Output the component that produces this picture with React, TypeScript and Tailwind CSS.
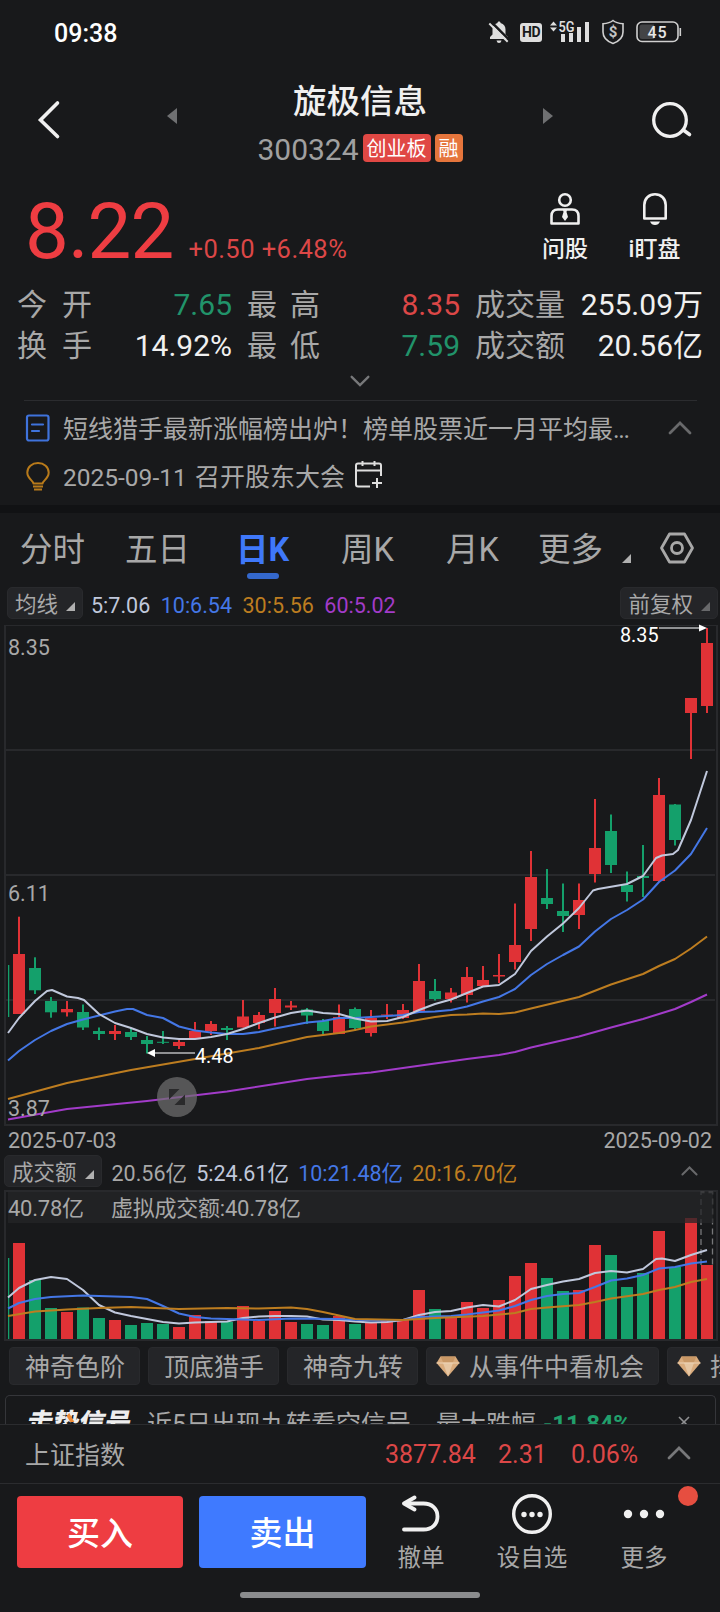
import { ReactNode } from "react";

const RED = "#e03236";
const GREEN = "#14a06b";

// [high, top, bottom, low, volume top, up]
type Candle = [number, number, number, number, number, boolean];

const candles: Candle[] = [
  [916.7, 954, 1014, 1014, 1243, true],
  [957.3, 968, 990.3, 994, 1280, false],
  [997, 1001, 1012.3, 1017.7, 1308, false],
  [1001, 1009, 1012.3, 1016.5, 1312, true],
  [1004.5, 1012, 1027.5, 1030, 1307.5, false],
  [1027.5, 1031, 1034, 1040, 1318, false],
  [1025, 1031, 1034, 1040, 1320, true],
  [1028, 1032, 1037, 1040, 1325, false],
  [1036, 1040, 1044, 1053.5, 1323, false],
  [1031, 1041.8, 1042.8, 1044, 1324, false],
  [1040, 1042, 1046, 1049, 1327, true],
  [1022, 1031, 1038, 1038, 1315, true],
  [1021, 1024, 1031, 1035, 1321, true],
  [1026, 1028, 1030, 1040, 1322, false],
  [1000, 1016.5, 1027.5, 1027.5, 1306, true],
  [1012, 1015, 1023, 1029, 1321, true],
  [988, 999, 1013, 1026.5, 1311, true],
  [1001, 1005.5, 1007.5, 1010, 1322, true],
  [1008, 1009.5, 1015.5, 1024, 1324, false],
  [1019, 1021, 1031, 1034, 1325, false],
  [1004.5, 1017, 1034, 1034, 1316, true],
  [1007.5, 1009, 1028, 1031, 1324, false],
  [1010, 1018, 1033, 1036.5, 1323, true],
  [1004, 1014.5, 1015.5, 1019, 1321, true],
  [1004, 1010, 1018, 1019, 1320, true],
  [964, 981, 1012, 1013, 1290, true],
  [979, 991, 999, 1000.5, 1309, false],
  [988, 992.5, 999, 1002.5, 1318, true],
  [967, 977, 995, 1002.5, 1302, true],
  [966, 980, 986, 987, 1308, true],
  [954, 975, 976.5, 983, 1300, true],
  [903.5, 945, 962, 969.5, 1276, true],
  [851, 877, 929, 941, 1263, true],
  [869, 898, 904, 909, 1278, false],
  [883.5, 911, 916, 932, 1291, false],
  [883.5, 900, 915, 929, 1290, true],
  [799, 848, 874, 882.5, 1245, true],
  [814.5, 831, 865, 873, 1255, false],
  [871.5, 885, 892, 901.5, 1287, false],
  [845, 876, 878, 897, 1273, false],
  [778, 795, 881, 882, 1231, true],
  [804, 804.5, 840, 845.5, 1267, false],
  [698, 698, 713, 759, 1218, true],
  [628, 643, 706, 713, 1265, true],
];

const priceLines = [
  {
    color: "#a23bc9",
    points:
      "8,1119.5 67,1109 147,1101 227,1091.5 275,1084 307,1079 339,1075.5 371,1072.5 403,1068 467,1059 499,1055 515,1052 531,1047.5 579,1036.5 611,1027.5 643,1019 659,1014 675,1009 691,1002 707,994.5",
  },
  {
    color: "#bd7d20",
    points:
      "8,1099 67,1083 131,1070 195,1059 259,1048 307,1037 323,1035 339,1033 355,1030 371,1026.5 403,1022.5 435,1017 451,1015 467,1014.5 483,1013.5 499,1014 515,1012.5 531,1008.5 579,997 611,984.5 643,974 659,966 675,959 691,948.5 707,936.5",
  },
  {
    color: "#4477e6",
    points:
      "8,1060.5 19,1051 35,1040 51,1031 67,1024 83,1019.5 99,1015.5 115,1011.5 127,1009 133,1009 147,1015 163,1018 179,1026.5 195,1030.5 211,1032.5 227,1034 243,1034 259,1032 275,1028.5 291,1025.5 307,1022.5 323,1021 339,1018 355,1018 371,1017 387,1016 403,1015 419,1012 435,1011.5 451,1010 467,1006.5 483,1001.5 499,997 515,989 531,975 547,964 563,955 579,946.5 595,931.5 611,919 627,910 643,899.5 659,882 675,870.5 691,854 707,828",
  },
  {
    color: "#c0c8dc",
    points:
      "8,1033 19,1018 35,1001 47,991 52,990 67,996.5 78,998 84,1000 99,1014 115,1023 131,1028 147,1034 163,1037.5 179,1039 195,1039 211,1037 227,1034 243,1029 259,1023 275,1017.5 291,1013 307,1010.5 323,1013 339,1014 355,1018.5 371,1021.5 387,1021 403,1017 419,1010 435,1004 451,999.5 467,993 483,986.5 499,985 515,974 531,951 547,936.5 563,923.5 579,908 593,890.5 598,889 627,884 643,876 656,858 662,855.5 673,854 678,850 691,820 707,771",
  },
];

const volumeLines = [
  {
    color: "#c0c8dc",
    points:
      "8,1297.5 19,1288 35,1280 51,1277 67,1279 83,1290 99,1305 115,1312.5 131,1316 147,1319 163,1322 179,1323.5 195,1322.5 227,1321.5 243,1318 259,1316.5 275,1316 291,1316 307,1316.5 323,1319.5 339,1320 355,1321.5 371,1322.5 387,1322 403,1320 419,1315 435,1312 451,1311 467,1307.5 483,1305 499,1306.5 515,1300 531,1289 547,1285 563,1281.5 579,1279 595,1273 611,1271 627,1272.5 643,1269 656,1259 662,1258.5 675,1261 691,1255 707,1250",
  },
  {
    color: "#4477e6",
    points:
      "8,1308.5 19,1303 35,1299 51,1297 83,1295.5 99,1296 131,1297 147,1299 163,1306 179,1313.5 195,1317 211,1318.5 243,1319.5 259,1320 291,1318.5 339,1319 371,1320.5 403,1320 419,1317 451,1316 467,1314.5 483,1312.5 499,1310.5 515,1306 531,1300 547,1296 563,1294 579,1293 595,1287 611,1280.5 627,1278.5 643,1275 659,1268.5 675,1267 691,1263.5 707,1261.5",
  },
  {
    color: "#bd7d20",
    points:
      "8,1316 35,1311.5 67,1309.5 99,1308 131,1307 179,1309 227,1308 259,1308.5 291,1307.5 307,1309 323,1312 339,1315.5 355,1319 403,1320 435,1318 483,1316 515,1313 531,1309 547,1307.5 579,1305 595,1302 611,1298.5 643,1294 659,1290 675,1287 691,1282 707,1279",
  },
];

function Corner({ className = "text-[#b0b0b0]" }: { className?: string }) {
  return (
    <svg width="9" height="9" viewBox="0 0 9 9" className={className}>
      <path d="M9 0V9H0Z" fill="currentColor" />
    </svg>
  );
}

function ChevronUp({ w, h, className }: { w: number; h: number; className: string }) {
  return (
    <svg width={w} height={h} viewBox="0 0 24 14" className={className}>
      <path
        d="M2 12L12 2L22 12"
        fill="none"
        stroke="currentColor"
        strokeWidth="2.8"
        strokeLinecap="round"
      />
    </svg>
  );
}

function Gem() {
  return (
    <svg width="24" height="21" viewBox="0 0 24 21" className="shrink-0">
      <path d="M4.5 0.5H19.5L23.5 7L12 20.5L0.5 7Z" fill="#d9ab7c" />
      <path d="M4.5 0.5H19.5L17 6H7Z" fill="#c99866" />
      <path d="M7 7H17L12 20.5Z" fill="#e6c6a2" />
      <path d="M0.5 7H23.5" stroke="#ecd3b5" strokeWidth="1" />
    </svg>
  );
}

function StatusBar() {
  return (
    <div className="flex h-[64px] shrink-0 items-center pl-[54px] pr-[38px] text-white">
      <span className="pt-[2px] text-[25px] font-medium leading-none">09:38</span>
      <svg width="22" height="24" viewBox="0 0 22 24" className="ml-auto">
        <path
          d="M11 1.5C12 1.5 12.5 2 12.5 3C16 4 17.5 6.5 17.5 9.5V14.5L20 17V19H2V17L4.5 14.5V9.5C4.5 6.5 6 4 9.5 3C9.5 2 10 1.5 11 1.5Z"
          fill="#dedede"
        />
        <path d="M8.5 20.5H13.5Q13 23 11 23T8.5 20.5Z" fill="#dedede" />
        <path d="M3.3 2L22 20.7" stroke="#18191b" strokeWidth="2.5" />
        <path d="M1.3 3.5L19.7 21.8" stroke="#dedede" strokeWidth="2" />
      </svg>
      <span className="ml-[10px] flex h-[19px] w-[22px] items-center justify-center rounded-[3px] bg-[#dedede] text-[14px] font-bold leading-none tracking-[-0.5px] text-[#18191b]">
        HD
      </span>
      <svg width="41" height="24" viewBox="0 0 41 24" className="ml-[8px]">
        <path d="M0 5.5L3.5 1.5L7 5.5ZM0 7.500L3.500 11.500L7 7.500Z" fill="#dedede" />
        <text
          x="8.500"
          y="11.500"
          fontSize="14.500"
          fontWeight="600"
          textLength="16"
          lengthAdjust="spacingAndGlyphs"
          fill="#dedede"
        >
          5G
        </text>
        <path
          d="M11 14h4v8h-4zM19 13h4v9h-4zM27 7h4v15h-4zM35 2h4v20h-4z"
          fill="#dedede"
        />
      </svg>
      <svg width="24" height="26" viewBox="0 0 24 26" className="ml-[10px]">
        <path
          d="M12 1.5C15 4 18.5 4.5 22 4.8V13C22 18.5 17.5 22.5 12 24.5C6.5 22.5 2 18.5 2 13V4.8C5.5 4.5 9 4 12 1.5Z"
          fill="none"
          stroke="#d0d0d0"
          strokeWidth="1.6"
        />
        <text x="12" y="18" fontSize="15" fontWeight="700" textAnchor="middle" fill="#c4c4c4">
          $
        </text>
      </svg>
      <svg width="46" height="22" viewBox="0 0 46 22" className="ml-[11px]">
        <rect x="1" y="1" width="41" height="19.500" rx="5" fill="none" stroke="#d0d0d0" strokeWidth="1.600" />
        <path d="M6 3.500H18V18H6Q3.500 18 3.500 15.500V6Q3.500 3.500 6 3.500Z" fill="#434446" />
        <rect x="43.500" y="7" width="1.600" height="8" fill="#d0d0d0" />
        <text x="21.500" y="16.500" fontSize="16" fontWeight="500" textAnchor="middle" letterSpacing="0.800" fill="#e6e6e6">
          45
        </text>
      </svg>
    </div>
  );
}

function Header() {
  return (
    <header className="flex h-[116px] shrink-0 items-start">
      <svg width="24" height="42" viewBox="0 0 24 42" className="ml-[37px] mt-[35px]">
        <path
          d="M20.5 4L3.5 21L20.5 37.5"
          fill="none"
          stroke="#f0f0f0"
          strokeWidth="3.6"
          strokeLinecap="round"
        />
      </svg>
      <svg width="10" height="16" viewBox="0 0 10 16" className="ml-[106px] mt-[44px]">
        <path d="M10 0V16L0 8Z" fill="#6f7072" />
      </svg>
      <div className="flex w-[366px] flex-col items-center">
        <h1 className="mt-[17px] h-[42px] text-[33.5px] font-medium leading-[42px] text-[#f0f0f0]">
          旋极信息
        </h1>
        <div className="mt-[8px] flex h-[35px] items-center">
          <span className="mr-[4px] pt-[2px] text-[30px] leading-[35px] text-[#a0a0a0]">300324</span>
          <span className="mb-[2px] flex h-[28px] w-[68px] items-center justify-center rounded-[4px] bg-[#e04844] pt-[2px] text-[20px] leading-none text-white">
            创业板
          </span>
          <span className="mb-[2px] ml-[4px] flex h-[28px] w-[28px] items-center justify-center rounded-[4px] bg-[#e5753c] pt-[2px] text-[20px] leading-none text-white">
            融
          </span>
        </div>
      </div>
      <svg width="10" height="16" viewBox="0 0 10 16" className="mt-[44px]">
        <path d="M0 0V16L10 8Z" fill="#6f7072" />
      </svg>
      <svg width="42" height="38" viewBox="0 0 42 38" className="ml-[98px] mt-[37px]">
        <circle cx="19" cy="19" r="16.3" fill="none" stroke="#f0f0f0" strokeWidth="3.3" />
        <path d="M33 29.5L38.500 33.500" stroke="#f0f0f0" strokeWidth="3.600" strokeLinecap="round" />
      </svg>
    </header>
  );
}

function Price() {
  return (
    <section className="flex h-[100px] shrink-0">
      <div className="flex w-[525px] items-baseline pl-[25px] text-[#ee3d42]">
        <span className="text-[78px] leading-[104px] tracking-[-0.9px]">8.22</span>
        <span className="ml-[15px] text-[25.5px] tracking-[0.45px] text-[#dc4747]">+0.50 +6.48%</span>
      </div>
      <div className="flex w-[80px] flex-col items-center pt-[12px]">
        <svg width="32" height="34" viewBox="0 0 32 34">
          <circle cx="16" cy="8" r="5.8" fill="none" stroke="#f0f0f0" strokeWidth="2.6" />
          <path
            d="M9 17.5H23C27.5 17.5 29.5 20 29.5 24V31.5H2.5V24C2.5 20 4.5 17.5 9 17.5Z"
            fill="none"
            stroke="#f0f0f0"
            strokeWidth="2.6"
            strokeLinejoin="round"
          />
          <path d="M14 18H18L17.5 20L19 25L16 29L13 25L14.5 20Z" fill="#f0f0f0" />
        </svg>
        <span className="mt-[8px] text-[23px] font-medium leading-[32px] text-[#f0f0f0]">问股</span>
      </div>
      <div className="flex w-[99px] flex-col items-center pt-[12px]">
        <svg width="28" height="34" viewBox="0 0 28 34">
          <path
            d="M3.3 26.5V13C3.3 6.5 8 2.3 14 2.3S24.7 6.5 24.7 13V26.5Z"
            fill="none"
            stroke="#f0f0f0"
            strokeWidth="2.6"
            strokeLinejoin="round"
          />
          <path d="M9 29.5H19Q17.5 33 14 33T9 29.5Z" fill="#f0f0f0" />
        </svg>
        <span className="mt-[8px] text-[23px] font-medium leading-[32px] text-[#f0f0f0]">i盯盘</span>
      </div>
    </section>
  );
}

function Stat({ label, value, className }: { label: string[]; value: string; className: string }) {
  return (
    <>
      <span className="flex justify-between text-[#a8a8a8]">
        {label.map((c) => (
          <span key={c}>{c}</span>
        ))}
      </span>
      <span className={"text-right " + className}>{value}</span>
    </>
  );
}

function Stats() {
  return (
    <section className="shrink-0 pt-[4px]">
      <div className="flex h-[82px] gap-[15px] pl-[17px] pr-[17px] text-[30px] leading-[41px]">
        <div className="grid w-[215px] grid-cols-[75px_1fr]">
          <Stat label={["今", "开"]} value="7.65" className="text-[#21936a]" />
          <Stat label={["换", "手"]} value="14.92%" className="text-[#f0f0f0]" />
        </div>
        <div className="grid w-[213px] grid-cols-[73px_1fr]">
          <Stat label={["最", "高"]} value="8.35" className="text-[#dc4747]" />
          <Stat label={["最", "低"]} value="7.59" className="text-[#21936a]" />
        </div>
        <div className="grid flex-1 grid-cols-[90px_1fr]">
          <Stat label={["成交量"]} value="255.09万" className="text-[#f0f0f0]" />
          <Stat label={["成交额"]} value="20.56亿" className="text-[#f0f0f0]" />
        </div>
      </div>
      <div className="flex h-[34px] justify-center pt-[9px]">
        <ChevronUp w={20} h={12} className="rotate-180 text-[#77787a]" />
      </div>
    </section>
  );
}

function News() {
  return (
    <section className="ml-[24px] mr-[23px] h-[105px] shrink-0 border-t border-[#2b2c2f] text-[25px] text-[#a8a8a8]">
      <div className="flex h-[54px] items-center">
        <svg width="25" height="28" viewBox="0 0 25 28" className="ml-[1px]">
          <rect x="2" y="1.5" width="21.5" height="25" rx="2" fill="none" stroke="#3f73dc" strokeWidth="2.2" />
          <path d="M7 10.5H18M7 17H14" stroke="#3f73dc" strokeWidth="2.2" strokeLinecap="round" />
        </svg>
        <span className="ml-[13px] whitespace-nowrap pt-[3px] leading-[32px]">
          短线猎手最新涨幅榜出炉！榜单股票近一月平均最<span className="tracking-[-1.3px]">...</span>
        </span>
        <ChevronUp w={24} h={14} className="ml-auto mr-[5px] text-[#68696b]" />
      </div>
      <div className="flex h-[45px] items-center">
        <svg width="26" height="30" viewBox="0 0 26 30" className="ml-[1px] mt-[-4px]">
          <path
            d="M8.5 22.5C8 19.5 2.3 17.5 2.3 11.5C2.3 6 7 2 13 2S23.7 6 23.7 11.5C23.7 17.5 18 19.5 17.5 22.5Z"
            fill="none"
            stroke="#b87a1a"
            strokeWidth="2"
            strokeLinejoin="round"
          />
          <path d="M8 25.5H18M9 28.5H17" stroke="#b87a1a" strokeWidth="1.8" />
        </svg>
        <span className="ml-[12px] whitespace-nowrap leading-[32px]">
          <span className="mr-[2px] text-[24.5px]">2025-09-11</span> 召开股东大会
        </span>
        <svg width="30" height="30" viewBox="0 0 30 30" className="ml-[9px] mt-[-5px]">
          <path
            d="M16 26.5H4Q2 26.5 2 24.5V5.5Q2 3.5 4 3.5H25Q27 3.5 27 5.5V16M2 10.5H27M8.5 1V6M20.5 1V6M23 18V28M18 23H28"
            fill="none"
            stroke="#dedede"
            strokeWidth="2"
          />
        </svg>
      </div>
    </section>
  );
}

function Tab({ children, active }: { children: ReactNode; active?: boolean }) {
  return (
    <div
      className={
        "relative flex w-[105px] justify-center leading-[44px] " +
        (active ? "font-bold text-[#3f78fa]" : "text-[#a8a8a8]")
      }
    >
      {children}
      {active && <span className="absolute top-[45px] h-[6px] w-[32px] rounded-full bg-[#3468cc]" />}
    </div>
  );
}

function Tabs() {
  return (
    <nav className="flex h-[74px] shrink-0 pt-[15px] text-[32.5px]">
      <Tab>分时</Tab>
      <Tab>五日</Tab>
      <Tab active>日K</Tab>
      <Tab>周K</Tab>
      <Tab>月K</Tab>
      <div className="flex w-[106px] pl-[13px] leading-[44px] text-[#a8a8a8]">
        更多
        <Corner className="ml-auto mt-[26px] text-[#b0b0b0]" />
      </div>
      <svg width="36" height="32" viewBox="0 0 36 32" className="ml-[28px] mt-[4px]">
        <path
          d="M10.5 2H25.5L33.5 16L25.5 30H10.5L2.5 16Z"
          fill="none"
          stroke="#a8a8a8"
          strokeWidth="2.8"
          strokeLinejoin="round"
        />
        <circle cx="18" cy="16" r="5.5" fill="none" stroke="#a8a8a8" strokeWidth="2.8" />
      </svg>
    </nav>
  );
}

function Picker({ label, dim }: { label: string; dim?: boolean }) {
  return (
    <div className="flex h-[32px] items-center rounded-[5px] border border-[#292a2d] bg-[#242528] px-[7px] leading-none text-[#a8a8a8]">
      <span className="whitespace-nowrap pt-[3px]">{label}</span>
      <Corner
        className={dim ? "ml-[8px] mt-[6px] text-[#68696b]" : "ml-[8px] mt-[6px] text-[#b0b0b0]"}
      />
    </div>
  );
}

function PriceChart() {
  return (
    <svg width="720" height="502" viewBox="0 624 720 502" className="block shrink-0">
      <g stroke="#28292c" strokeWidth="2" fill="none">
        <path d="M4 625.5H718" strokeWidth="1" />
        <path d="M5 625V1125H717V625" />
        <path d="M6 750H715M6 875H715M6 1000H715" />
      </g>
      <rect x="8" y="965" width="1.3" height="52" fill={GREEN} />
      {candles.map(([high, top, bottom, low, , up], i) => (
        <g key={i} fill={up ? RED : GREEN}>
          <rect x={18 + i * 16} y={high} width="2" height={low - high} />
          <rect x={13 + i * 16} y={top} width="12" height={bottom - top} />
        </g>
      ))}
      {priceLines.map((line) => (
        <polyline
          key={line.color}
          points={line.points}
          fill="none"
          stroke={line.color}
          strokeWidth="2"
          strokeLinejoin="round"
        />
      ))}
      <circle cx="177" cy="1097" r="20" fill="#707070" fillOpacity="0.7" />
      <path d="M169 1089H179.5L169 1099.5ZM185 1105H174.5L185 1094.5Z" fill="#2a2a2b" />
      <g stroke="#909193" strokeWidth="1.8">
        <path d="M154 1053H195M659 628H700" />
      </g>
      <path d="M147 1053L155 1049V1057ZM707 628L699 624.5V631.5Z" fill="#fff" />
      <g fontSize="19.8" fill="#fff">
        <text x="620" y="642">8.35</text>
        <text x="195" y="1063">4.48</text>
      </g>
      <g fontSize="21.5" fill="#a8a8a8">
        <text x="8" y="655">8.35</text>
        <text x="8" y="901">6.11</text>
        <text x="8" y="1116">3.87</text>
      </g>
    </svg>
  );
}

function VolumeChart() {
  return (
    <svg width="720" height="151" viewBox="0 1190 720 151" className="block shrink-0">
      <rect x="5" y="1191" width="712" height="149" fill="none" stroke="#28292c" strokeWidth="2" />
      <rect x="8" y="1258" width="1.3" height="81" fill={GREEN} />
      {candles.map((c, i) => (
        <rect key={i} x={13 + i * 16} y={c[4]} width="12" height={1339 - c[4]} fill={c[5] ? RED : GREEN} />
      ))}
      <path d="M701 1265V1192.5H712.5V1265" fill="none" stroke="#77787a" strokeWidth="1.3" strokeDasharray="6 4" />
      {volumeLines.map((line) => (
        <polyline
          key={line.color}
          points={line.points}
          fill="none"
          stroke={line.color}
          strokeWidth="2"
          strokeLinejoin="round"
        />
      ))}
      <rect x="8" y="1192" width="705" height="31" fill="#242528" fillOpacity="0.75" />
      <g fontSize="22" fill="#a8a8a8">
        <text x="8" y="1215.5" textLength="76">40.78亿</text>
        <text x="111" y="1215.5" textLength="190">虚拟成交额:40.78亿</text>
      </g>
    </svg>
  );
}

function Chip({ children, gem }: { children: ReactNode; gem?: boolean }) {
  return (
    <div
      className={
        "flex h-[38px] shrink-0 items-center rounded-[4px] border border-[#292a2d] bg-[#242528] pr-[14px] leading-none " +
        (gem ? "gap-[9px] pl-[9px]" : "pl-[15px]")
      }
    >
      {gem && <Gem />}
      <span className="whitespace-nowrap pt-[3px]">{children}</span>
    </div>
  );
}

function SignalCard() {
  return (
    <div className="ml-[5px] mr-[4px] mt-[10px] flex h-[29px] shrink-0 items-start overflow-hidden rounded-t-[5px] border border-b-0 border-[#35363a] text-[25px] leading-[57px]">
      <span className="relative ml-[21px] w-[104px] -skew-x-12 whitespace-nowrap text-[26px] font-black leading-[55px] text-[#eeeeee]">
        走势信号
        <svg width="10" height="10" viewBox="0 0 10 10" className="absolute left-[38px] top-[17px]">
          <path d="M2 0L9 9H5L0 3Z" fill="#ee8a35" />
        </svg>
      </span>
      <span className="ml-[16px] whitespace-nowrap text-[#a8a8a8]">
        近5日出现九转看空信号，最大跌幅
      </span>
      <span className="ml-[7px] text-[24px] font-bold tracking-[-0.2px] text-[#21a06c]">-11.84%</span>
      <svg width="12" height="12" viewBox="0 0 12 12" className="ml-auto mr-[25px] mt-[20px]">
        <path d="M1 1L11 11M11 1L1 11" stroke="#909193" strokeWidth="1.6" />
      </svg>
    </div>
  );
}

function IndexBar() {
  return (
    <div className="flex h-[59px] shrink-0 items-center border-t border-[#2b2c2f] pl-[25px] pr-[29px] text-[25px] text-[#dc4747]">
      <span className="w-[360px] pt-[3px] leading-[32px] text-[#a8a8a8]">上证指数</span>
      <span className="w-[113px] pt-[2px] leading-[32px]">3877.84</span>
      <span className="w-[73px] pt-[2px] leading-[32px]">2.31</span>
      <span className="pt-[2px] leading-[32px]">0.06%</span>
      <ChevronUp w={24} h={14} className="mb-[2px] ml-auto text-[#77787a]" />
    </div>
  );
}

function Action({ label, icon, className }: { label: string; icon: ReactNode; className: string }) {
  return (
    <button className={"relative flex flex-col items-center " + className}>
      <span className="flex h-[42px] items-center">{icon}</span>
      <span className="mt-[7px] whitespace-nowrap text-[23.5px] leading-[32px] text-[#a8a8a8]">{label}</span>
    </button>
  );
}

function TradeBar() {
  return (
    <footer className="flex h-[109px] shrink-0 items-start border-t border-[#2b2c2f] pl-[17px]">
      <button className="mt-[12px] h-[72px] w-[166px] rounded-[4px] bg-[#ee3d42] pt-[3px] text-[33px] font-medium leading-[69px] text-white">
        买入
      </button>
      <button className="ml-[16px] mt-[12px] h-[72px] w-[167px] rounded-[4px] bg-[#3f7aff] pt-[3px] text-[33px] font-medium leading-[69px] text-white">
        卖出
      </button>
      <Action
        label="撤单"
        className="ml-[15px] mt-[9px] w-[80px]"
        icon={
          <svg width="40" height="38" viewBox="0 0 40 38" className="mb-[1px]">
            <path
              d="M3 34.5H22.5C31 34.5 36.5 29 36.5 21.5S31 8.5 22.5 8.5H6"
              fill="none"
              stroke="#f0f0f0"
              strokeWidth="3.8"
              strokeLinecap="round"
            />
            <path
              d="M13.500 2.500L3 8.500L13.500 14.500"
              fill="none"
              stroke="#f0f0f0"
              strokeWidth="3.800"
              strokeLinecap="round"
              strokeLinejoin="round"
            />
          </svg>
        }
      />
      <Action
        label="设自选"
        className="ml-[31px] mt-[9px] w-[80px]"
        icon={
          <svg width="42" height="42" viewBox="0 0 42 42">
            <circle cx="21" cy="21" r="18.3" fill="none" stroke="#f0f0f0" strokeWidth="3.4" />
            <g fill="#f0f0f0">
              <circle cx="13" cy="21.5" r="2.7" />
              <circle cx="21" cy="21.5" r="2.7" />
              <circle cx="29" cy="21.5" r="2.7" />
            </g>
          </svg>
        }
      />
      <Action
        label="更多"
        className="ml-[32px] mt-[9px] w-[80px]"
        icon={
          <>
            <svg width="42" height="10" viewBox="0 0 42 10" fill="#f0f0f0">
              <circle cx="5" cy="5" r="4.2" />
              <circle cx="21" cy="5" r="4.2" />
              <circle cx="37" cy="5" r="4.2" />
            </svg>
            <i className="absolute left-[74px] top-[-7px] size-[20px] rounded-full bg-[#e64e40]" />
          </>
        }
      />
    </footer>
  );
}

export default function App() {
  return (
    <div className="flex h-[1612px] w-[720px] flex-col overflow-hidden bg-[#18191b] font-[Roboto,'Noto_Sans_CJK_SC',sans-serif]">
      <StatusBar />
      <Header />
      <Price />
      <Stats />
      <News />
      <div className="h-[8px] shrink-0 bg-[#111214]" />
      <Tabs />
      <div className="flex h-[37px] shrink-0 items-start pl-[7px] pr-[2px] text-[21.5px]">
        <Picker label="均线" />
        <div className="flex gap-[10.5px] pl-[8px] leading-[38px]">
          <span className="text-[#c0c8dc]">5:7.06</span>
          <span className="text-[#4477e6]">10:6.54</span>
          <span className="text-[#bd7d20]">30:5.56</span>
          <span className="text-[#a23bc9]">60:5.02</span>
        </div>
        <div className="ml-auto">
          <Picker label="前复权" dim />
        </div>
      </div>
      <PriceChart />
      <div className="flex h-[29px] shrink-0 justify-between px-[8px] text-[21.5px] leading-[29px] text-[#a8a8a8]">
        <span>2025-07-03</span>
        <span>2025-09-02</span>
      </div>
      <div className="flex h-[35px] shrink-0 items-start pl-[4px] pr-[22px] text-[21.5px]">
        <Picker label="成交额" />
        <div className="flex gap-[9.2px] pl-[10px] leading-[38px]">
          <span className="text-[#a8a8a8]">20.56亿</span>
          <span className="text-[#c0c8dc]">5:24.61亿</span>
          <span className="text-[#4477e6]">10:21.48亿</span>
          <span className="text-[#bd7d20]">20:16.70亿</span>
        </div>
        <ChevronUp w={17} h={10} className="ml-auto mt-[11px] text-[#68696b]" />
      </div>
      <VolumeChart />
      <div className="mt-[6px] flex h-[38px] shrink-0 gap-[8px] overflow-hidden pl-[9px] text-[25px] text-[#a8a8a8]">
        <Chip>神奇色阶</Chip>
        <Chip>顶底猎手</Chip>
        <Chip>神奇九转</Chip>
        <Chip gem>从事件中看机会</Chip>
        <Chip gem>择时</Chip>
      </div>
      <SignalCard />
      <IndexBar />
      <TradeBar />
      <div className="mx-auto h-[6px] w-[240px] shrink-0 rounded-full bg-[#8b8c8e]" />
    </div>
  );
}
